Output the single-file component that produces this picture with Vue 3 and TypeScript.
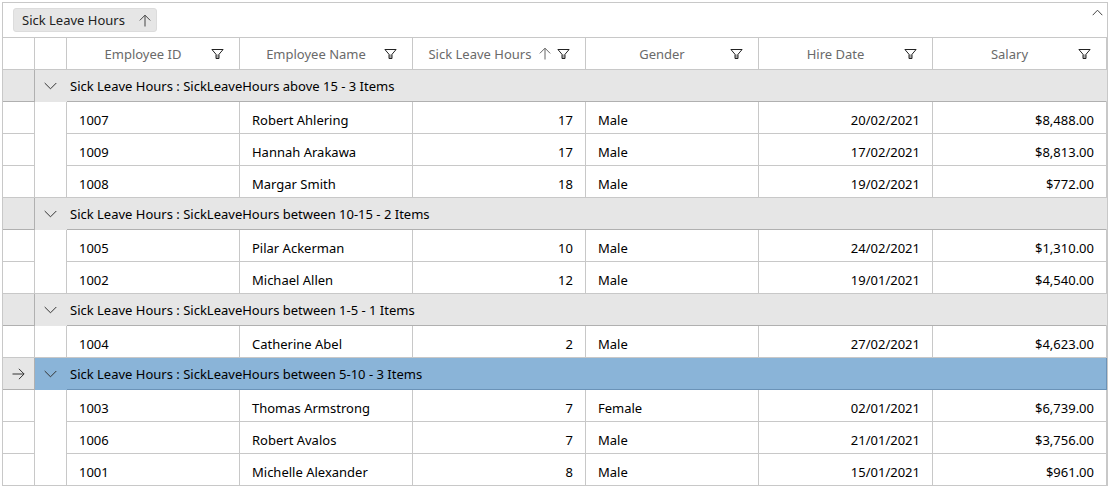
<script setup lang="ts">
import { ref } from 'vue'

interface Employee {
  id: string
  name: string
  hours: number
  gender: string
  hired: string
  salary: string
}

interface Column {
  key: keyof Employee
  title: string
  align: 'start' | 'end'
  sorted?: boolean
  stretch?: boolean
}

interface Group {
  range: string
  rows: Employee[]
}

const columns: Column[] = [
  { key: 'id', title: 'Employee ID', align: 'start' },
  { key: 'name', title: 'Employee Name', align: 'start' },
  { key: 'hours', title: 'Sick Leave Hours', align: 'end', sorted: true },
  { key: 'gender', title: 'Gender', align: 'start' },
  { key: 'hired', title: 'Hire Date', align: 'end', stretch: true },
  { key: 'salary', title: 'Salary', align: 'end', stretch: true },
]

const employee = (
  id: string,
  name: string,
  hours: number,
  gender: string,
  hired: string,
  salary: string,
): Employee => ({ id, name, hours, gender, hired, salary })

const groups: Group[] = [
  {
    range: 'above 15',
    rows: [
      employee('1007', 'Robert Ahlering', 17, 'Male', '20/02/2021', '$8,488.00'),
      employee('1009', 'Hannah Arakawa', 17, 'Male', '17/02/2021', '$8,813.00'),
      employee('1008', 'Margar Smith', 18, 'Male', '19/02/2021', '$772.00'),
    ],
  },
  {
    range: 'between 10-15',
    rows: [
      employee('1005', 'Pilar Ackerman', 10, 'Male', '24/02/2021', '$1,310.00'),
      employee('1002', 'Michael Allen', 12, 'Male', '19/01/2021', '$4,540.00'),
    ],
  },
  {
    range: 'between 1-5',
    rows: [employee('1004', 'Catherine Abel', 2, 'Male', '27/02/2021', '$4,623.00')],
  },
  {
    range: 'between 5-10',
    rows: [
      employee('1003', 'Thomas Armstrong', 7, 'Female', '02/01/2021', '$6,739.00'),
      employee('1006', 'Robert Avalos', 7, 'Male', '21/01/2021', '$3,756.00'),
      employee('1001', 'Michelle Alexander', 8, 'Male', '15/01/2021', '$961.00'),
    ],
  },
]

const selected = ref(3)
const collapsed = ref<number[]>([])
const panelOpen = ref(true)

const isOpen = (index: number): boolean => !collapsed.value.includes(index)

function toggle(index: number): void {
  selected.value = index
  collapsed.value = collapsed.value.includes(index)
    ? collapsed.value.filter((i) => i !== index)
    : [...collapsed.value, index]
}
</script>

<template>
  <main class="page">
    <section class="grid">
      <header class="group-panel">
        <button v-if="panelOpen" type="button" class="chip">
          Sick Leave Hours
          <svg class="arrow" viewBox="0 0 12 13" aria-hidden="true">
            <path d="M6 12.5V1.2M0.8 6.4L6 1.2l5.2 5.2" />
          </svg>
        </button>
        <button
          type="button"
          class="panel-toggle"
          aria-label="Toggle group panel"
          :aria-expanded="panelOpen"
          @click="panelOpen = !panelOpen"
        >
          <svg viewBox="0 0 11 7" aria-hidden="true"><path d="M0.7 6.2L5.5 1.2l4.8 5" /></svg>
        </button>
      </header>

      <table>
        <colgroup>
          <col class="narrow" />
          <col class="narrow" />
          <col v-for="column in columns" :key="column.key" :class="{ wide: !column.stretch }" />
        </colgroup>
        <thead>
          <tr>
            <td></td>
            <td></td>
            <th v-for="column in columns" :key="column.key" scope="col">
              <div class="heading">
                <span class="title">{{ column.title }}</span>
                <svg v-if="column.sorted" class="arrow sort" viewBox="0 0 12 13" aria-hidden="true">
                  <path d="M6 12.5V1.2M0.8 6.4L6 1.2l5.2 5.2" />
                </svg>
                <button type="button" class="filter" :aria-label="`Filter ${column.title}`">
                  <svg viewBox="0 0 13 12" aria-hidden="true">
                    <path class="stem" d="M5 6.5h3v4H5z" />
                    <path d="M0.9 1.5h11.2L8 6.3v4.2H5V6.3z" />
                  </svg>
                </button>
              </div>
            </th>
          </tr>
        </thead>
        <tbody v-for="(group, g) in groups" :key="group.range">
          <tr class="group" :class="{ selected: selected === g }" @click="selected = g">
            <td class="marker">
              <svg v-if="selected === g" viewBox="0 0 13 12" aria-hidden="true">
                <path d="M0.5 6h11.6M6.9 0.8L12.1 6l-5.2 5.2" />
              </svg>
            </td>
            <td class="expander">
              <button
                type="button"
                :aria-expanded="isOpen(g)"
                :aria-label="`Toggle group ${group.range}`"
                @click.stop="toggle(g)"
              >
                <svg viewBox="0 0 13 8" aria-hidden="true"><path d="M0.7 1l5.8 5.8L12.3 1" /></svg>
              </button>
            </td>
            <td class="caption" :colspan="columns.length">
              Sick Leave Hours : SickLeaveHours {{ group.range }} - {{ group.rows.length }} Items
            </td>
          </tr>
          <template v-if="isOpen(g)">
            <tr v-for="(row, r) in group.rows" :key="row.id">
              <td></td>
              <td v-if="r === 0" :rowspan="group.rows.length"></td>
              <td v-for="column in columns" :key="column.key" class="value" :class="column.align">
                {{ row[column.key] }}
              </td>
            </tr>
          </template>
        </tbody>
      </table>
    </section>
  </main>
</template>

<style>
body {
  margin: 0;
  background: #fff;
}
</style>

<style scoped>
.page {
  padding: 2px;
  font-family: 'Noto Sans', 'Open Sans', sans-serif;
  font-size: 13px;
  line-height: 20px;
  color: #000;
}

.grid {
  border: 1px solid #c8c8c8;
  border-bottom: 0;
}

button {
  padding: 0;
  border: 0;
  background: none;
  color: inherit;
  font: inherit;
}

svg {
  display: block;
  fill: none;
  stroke: currentColor;
  stroke-width: 1;
}

.group-panel {
  display: flex;
  align-items: center;
  justify-content: space-between;
  box-sizing: border-box;
  height: 35px;
  padding: 0 4px 0 10px;
  border-bottom: 1px solid #c8c8c8;
}

.chip {
  display: flex;
  align-items: center;
  gap: 14px;
  box-sizing: border-box;
  height: 24px;
  padding: 0 5px 0 8px;
  border: 1px solid #dcdcdc;
  border-radius: 3px;
  background: #e6e6e6;
  color: #222;
}

.arrow {
  width: 12px;
  height: 13px;
  color: #444;
}

.panel-toggle {
  align-self: flex-start;
  margin-left: auto;
  padding-top: 6px;
  color: #444;
}

.panel-toggle svg {
  width: 11px;
  height: 7px;
}

table {
  width: 100%;
  table-layout: fixed;
  border-collapse: separate;
  border-spacing: 0;
}

.narrow {
  width: 32px;
}

.wide {
  width: 15.67%;
}

th,
td {
  box-sizing: border-box;
  height: 32px;
  padding: 0;
  border: solid #c8c8c8;
  border-width: 0 1px 1px 0;
  font-weight: 400;
  text-align: left;
}

.heading {
  display: flex;
  align-items: center;
  padding: 0 15px 0 8px;
  color: #6a6a6a;
}

.title {
  flex: 1;
  text-align: center;
  white-space: nowrap;
}

.sort {
  margin-right: 6px;
  color: #666;
}

.filter {
  color: #222;
}

.filter svg {
  width: 13px;
  height: 12px;
}

.filter .stem {
  fill: #aaa;
  stroke: none;
}

.value {
  padding: 4px 12px 0;
}

.value.end {
  text-align: right;
}

.group td {
  border-color: #b0b0b0;
  background: #e6e6e6;
}

.group .expander {
  border-color: #e6e6e6;
}

.marker svg {
  width: 13px;
  height: 12px;
  margin: 0 auto;
  color: #333;
}

.expander button {
  display: block;
  margin: 0 auto;
  color: #333;
}

.expander svg {
  width: 13px;
  height: 8px;
}

.group .caption {
  padding: 0 3px;
  border-right-color: #e6e6e6;
}

.group.selected .expander,
.group.selected .caption {
  background: #8ab4d8;
}

.group.selected .expander {
  border-color: #8ab4d8;
}

.group.selected .caption {
  border-color: #6b93b8;
}
</style>
